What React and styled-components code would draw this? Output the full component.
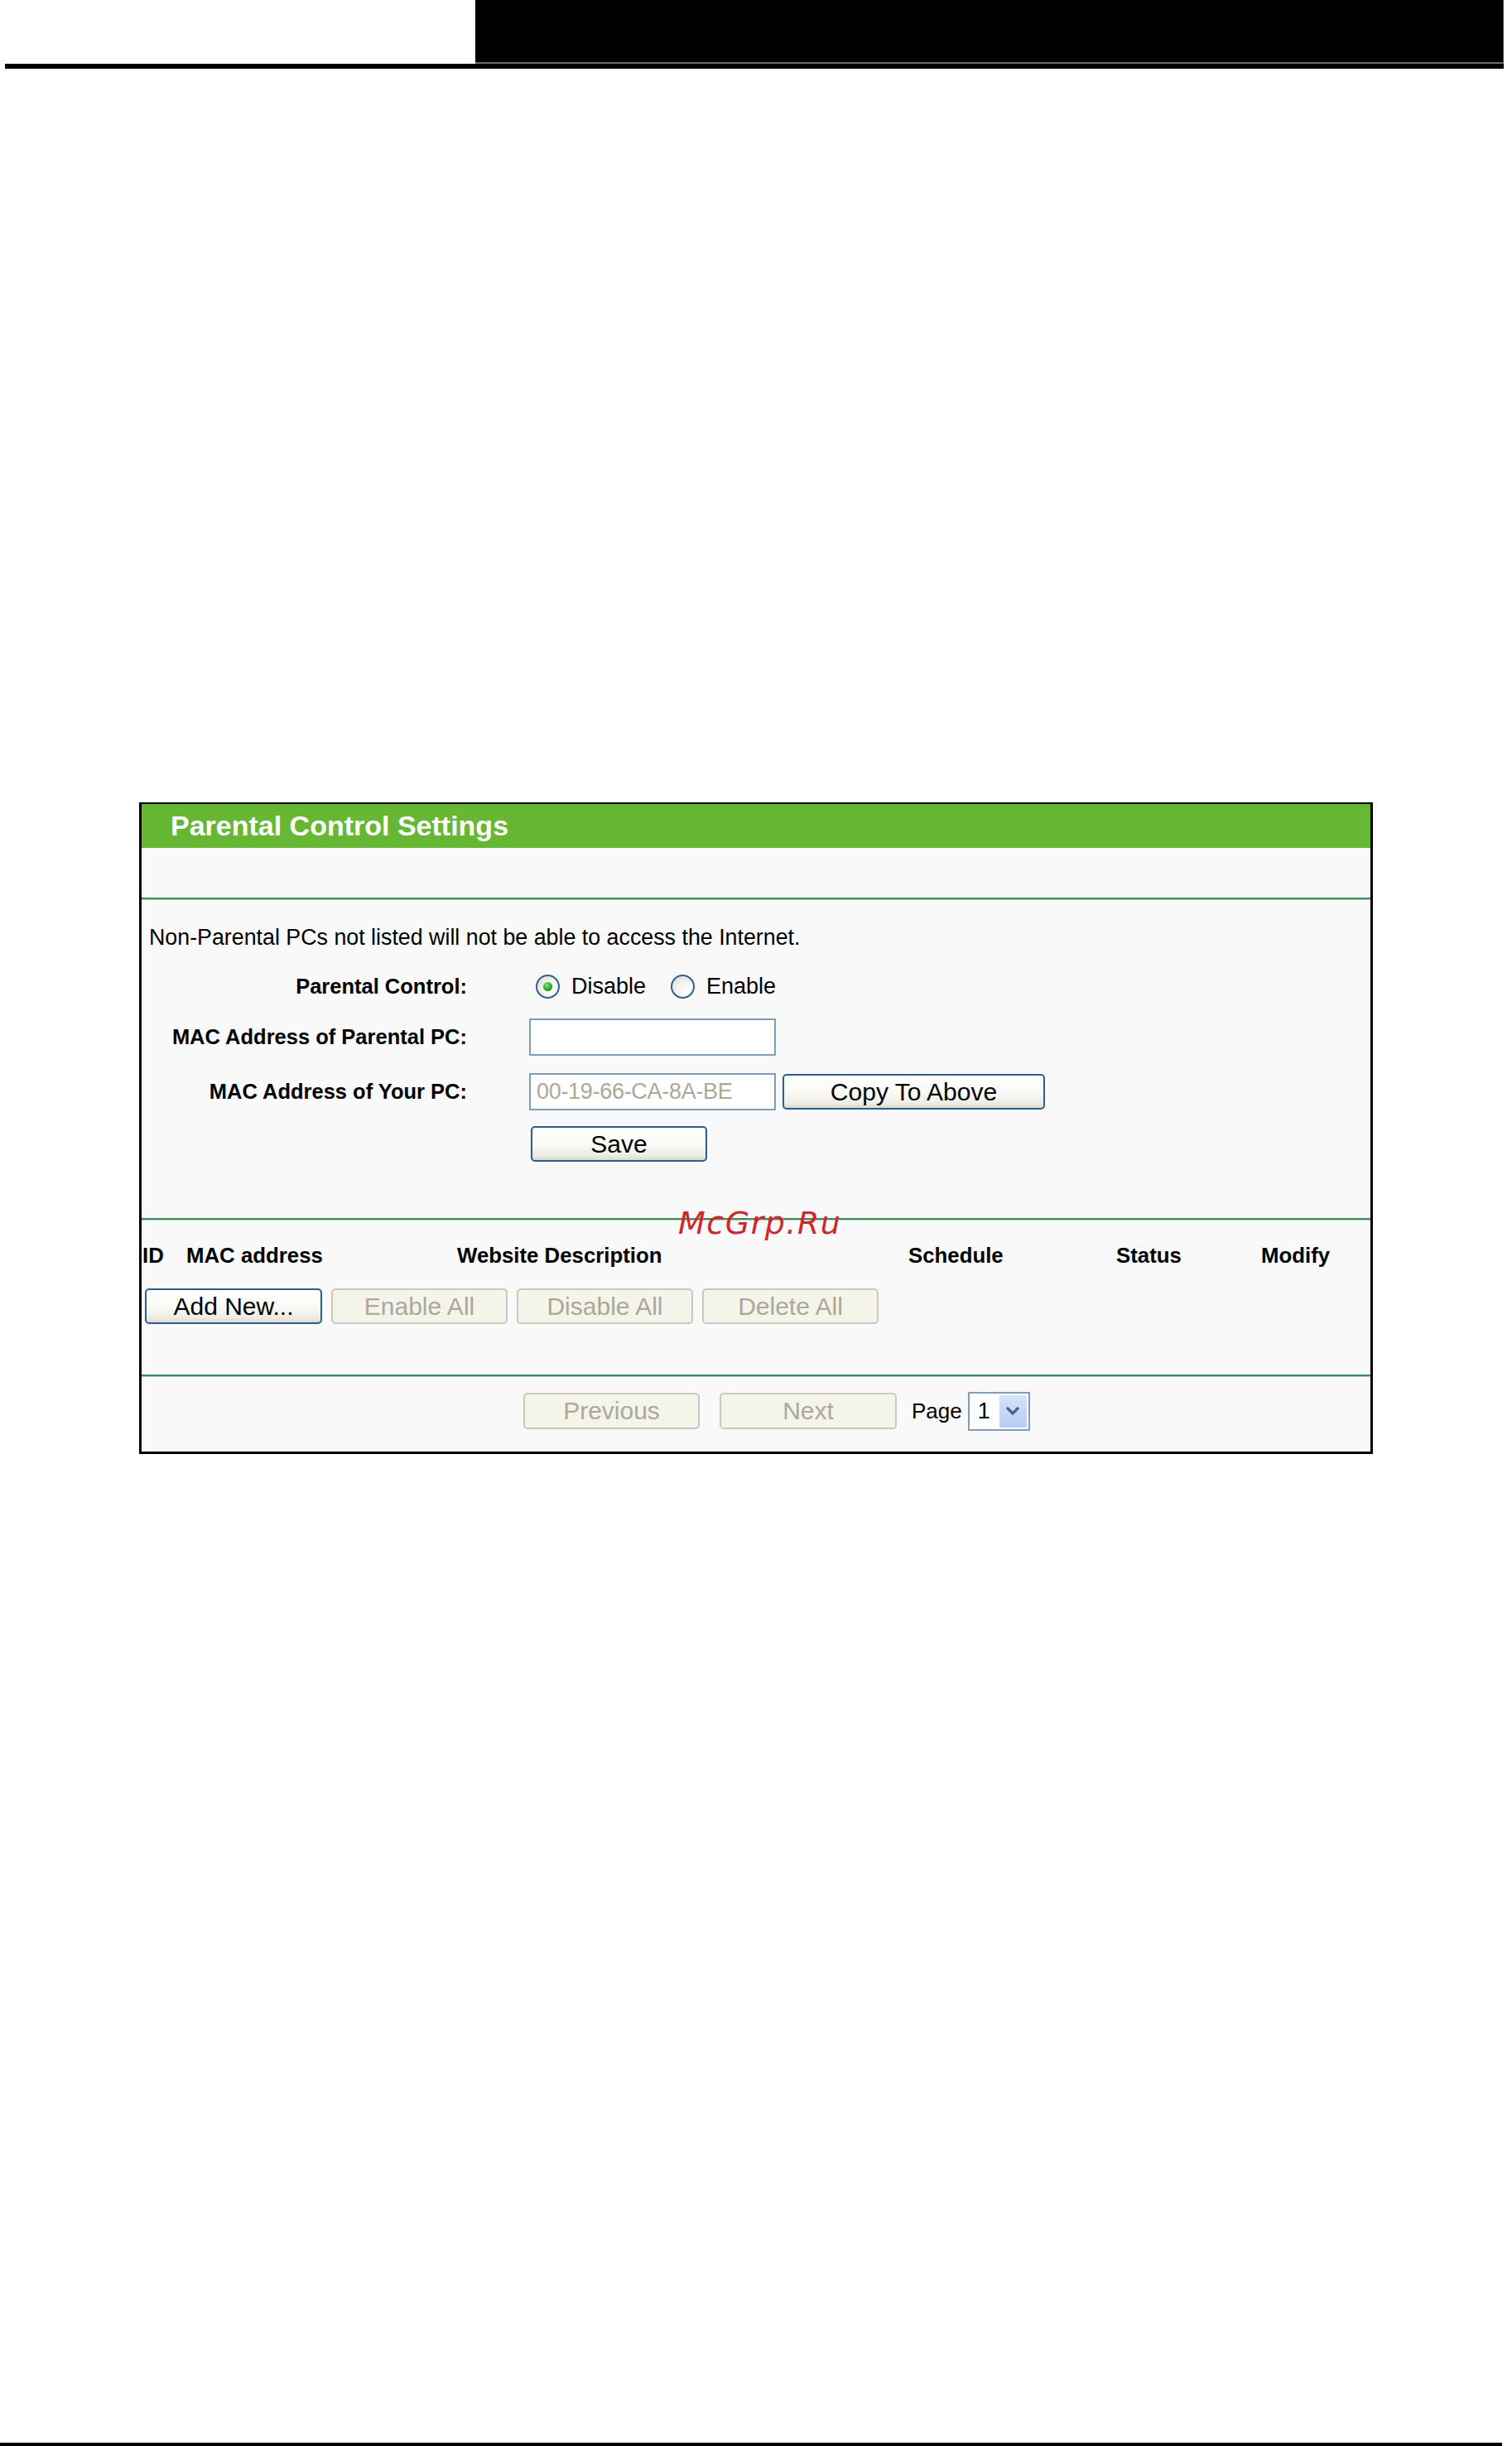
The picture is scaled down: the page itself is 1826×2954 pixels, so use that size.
import React from 'react';
import styled, { createGlobalStyle } from 'styled-components';

const GlobalStyle = createGlobalStyle`
  html, body { margin: 0; padding: 0; background: #ffffff; }
  body { font-family: "Liberation Sans", Arial, sans-serif; color: #000; }
  * { box-sizing: border-box; }
`;

const Page = styled.div`
  width: 1826px;
  height: 2954px;
  display: flex;
  flex-direction: column;
  background: #fff;
`;

const TopBar = styled.div`
  display: flex;
  height: 77px;
`;

const TopSpacer = styled.div`
  width: 574px;
`;

const TopBlack = styled.div`
  width: 1242px;
  background: #000;
  border-bottom: 2px solid #6f6f6f;
  border-right: 1px solid #4a4a4a;
`;

const TopRule = styled.div`
  margin-left: 6px;
  width: 1810px;
  height: 6px;
  background: #000;
`;

const BottomRule = styled.div`
  margin-top: auto;
  width: 1814px;
  height: 4px;
  background: #000;
`;

const Panel = styled.div`
  position: relative;
  margin-top: 886px;
  margin-left: 168px;
  width: 1490px;
  border: 3px solid #000;
  border-top-width: 2px;
  background: #f9f9f9;
`;

const Header = styled.div`
  height: 53px;
  background: #66b834;
  color: #fff;
  font-weight: bold;
  font-size: 34px;
  line-height: 53px;
  padding-left: 35px;
`;

const Band = styled.div`
  height: 60px;
`;

const Divider = styled.div`
  height: 3px;
  border-top: 2px solid #3e8c5b;
  border-bottom: 1px solid #a9d1b3;
`;

const Section = styled.div`
  padding-top: ${(p) => p.$pt}px;
  padding-bottom: ${(p) => p.$pb}px;
`;

const Note = styled.div`
  height: 32px;
  line-height: 32px;
  font-size: 26.8px;
  padding-left: 9px;
`;

const FormRow = styled.div`
  display: flex;
  align-items: center;
  gap: 75px;
  height: ${(p) => p.$h}px;
  margin-top: ${(p) => p.$mt}px;
`;

const Label = styled.div`
  width: 393px;
  text-align: right;
  font-weight: bold;
  font-size: 25.5px;
`;

const Value = styled.div`
  display: flex;
  align-items: center;
`;

const RadioGroup = styled.label`
  display: flex;
  align-items: center;
  font-size: 27px;
  margin-left: ${(p) => p.$ml}px;
`;

const RadioCircle = styled.span`
  position: relative;
  width: 29px;
  height: 29px;
  border-radius: 50%;
  border: 2px solid #2f6191;
  background: radial-gradient(circle at 70% 70%, #ffffff 0%, #f4f3ef 45%, #d8d6cc 100%);
  margin-right: 14px;
  display: flex;
  align-items: center;
  justify-content: center;
  flex-shrink: 0;
`;

const RadioDot = styled.span`
  width: 11px;
  height: 11px;
  border-radius: 50%;
  background: radial-gradient(circle at 40% 35%, #7fe07f 0%, #27a327 60%, #1a7d1a 100%);
`;

const TextInput = styled.div`
  width: 298px;
  height: 45px;
  border: 2px solid #7f9db9;
  background: #fff;
  font-size: 27px;
  line-height: 41px;
  padding-left: 7px;
  color: ${(p) => (p.$disabled ? '#aca899' : '#000')};
  letter-spacing: -0.3px;
`;

const Button = styled.div`
  width: ${(p) => p.$w}px;
  height: ${(p) => p.$h || 43}px;
  margin-left: ${(p) => p.$ml || 0}px;
  border-radius: 5px;
  display: flex;
  align-items: center;
  justify-content: center;
  font-size: 30px;
  flex-shrink: 0;
  border: 2px solid ${(p) => (p.$disabled ? '#cbc9bd' : '#2b5d8f')};
  color: ${(p) => (p.$disabled ? '#aca899' : '#000')};
  background: ${(p) =>
    p.$disabled
      ? '#f5f4ea'
      : 'linear-gradient(#ffffff 0%, #fafaf7 50%, #eeede5 85%, #dcd8cc 100%)'};
`;

const TableHead = styled.div`
  display: grid;
  grid-template-columns: 53px 327px 545px 251px 175px 1fr;
  align-items: center;
  height: 44px;
  margin-top: 20px;
  padding-left: 1px;
  font-weight: bold;
  font-size: 25.8px;
`;

const ButtonRow = styled.div`
  display: flex;
  gap: 11px;
  margin-top: 18px;
  padding-left: 4px;
`;

const Pager = styled.div`
  display: flex;
  align-items: center;
  height: 44px;
  padding-left: 461px;
`;

const PageText = styled.span`
  font-size: 26px;
  margin-left: 18px;
  margin-right: 7px;
`;

const Select = styled.div`
  width: 75px;
  height: 47px;
  border: 2px solid #7f9db9;
  background: #fff;
  display: flex;
  align-items: stretch;
  padding: 2px;
`;

const SelectValue = styled.div`
  flex: 1;
  font-size: 27px;
  display: flex;
  align-items: center;
  padding-left: 8px;
`;

const SelectArrow = styled.div`
  width: 33px;
  border-radius: 2px;
  background: linear-gradient(#d6e3fb, #b6cbf5);
  display: flex;
  align-items: center;
  justify-content: center;
`;

const Watermark = styled.div`
  position: absolute;
  left: 648px;
  top: 487px;
  font-family: "DejaVu Sans", sans-serif;
  font-style: italic;
  font-size: 38px;
  line-height: 1;
  letter-spacing: 1.5px;
  color: #d0262b;
  pointer-events: none;
`;

function Radio({ checked, label, ml }) {
  return (
    <RadioGroup $ml={ml}>
      <RadioCircle>{checked && <RadioDot />}</RadioCircle>
      {label}
    </RadioGroup>
  );
}

export default function App() {
  return (
    <>
      <GlobalStyle />
      <Page>
        <TopBar>
          <TopSpacer />
          <TopBlack />
        </TopBar>
        <TopRule />
        <Panel>
          <Header>Parental Control Settings</Header>
          <Band />
          <Divider />
          <Section $pt={29} $pb={68}>
            <Note>Non-Parental PCs not listed will not be able to access the Internet.</Note>
            <FormRow $h={54} $mt={16}>
              <Label>Parental Control:</Label>
              <Value>
                <Radio checked label="Disable" ml={8} />
                <Radio label="Enable" ml={30} />
              </Value>
            </FormRow>
            <FormRow $h={45} $mt={12}>
              <Label>MAC Address of Parental PC:</Label>
              <Value>
                <TextInput />
              </Value>
            </FormRow>
            <FormRow $h={45} $mt={21}>
              <Label>MAC Address of Your PC:</Label>
              <Value>
                <TextInput $disabled>00-19-66-CA-8A-BE</TextInput>
                <Button $w={317} $ml={8}>Copy To Above</Button>
              </Value>
            </FormRow>
            <FormRow $h={43} $mt={19}>
              <Label />
              <Value>
                <Button $w={213} $ml={2}>Save</Button>
              </Value>
            </FormRow>
          </Section>
          <Divider />
          <Section $pt={0} $pb={61}>
            <TableHead>
              <span>ID</span>
              <span>MAC address</span>
              <span>Website Description</span>
              <span>Schedule</span>
              <span>Status</span>
              <span>Modify</span>
            </TableHead>
            <ButtonRow>
              <Button $w={214}>Add New...</Button>
              <Button $w={213} $disabled>Enable All</Button>
              <Button $w={213} $disabled>Disable All</Button>
              <Button $w={213} $disabled>Delete All</Button>
            </ButtonRow>
          </Section>
          <Divider />
          <Section $pt={19} $pb={27}>
            <Pager>
              <Button $w={213} $h={44} $disabled>Previous</Button>
              <Button $w={214} $h={44} $ml={24} $disabled>Next</Button>
              <PageText>Page</PageText>
              <Select>
                <SelectValue>1</SelectValue>
                <SelectArrow>
                  <svg width="16" height="11" viewBox="0 0 16 11">
                    <path d="M2 2 L8 8 L14 2" fill="none" stroke="#4a5f8c" strokeWidth="3.2" strokeLinecap="square" />
                  </svg>
                </SelectArrow>
              </Select>
            </Pager>
          </Section>
          <Watermark>McGrp.Ru</Watermark>
        </Panel>
        <BottomRule />
      </Page>
    </>
  );
}
